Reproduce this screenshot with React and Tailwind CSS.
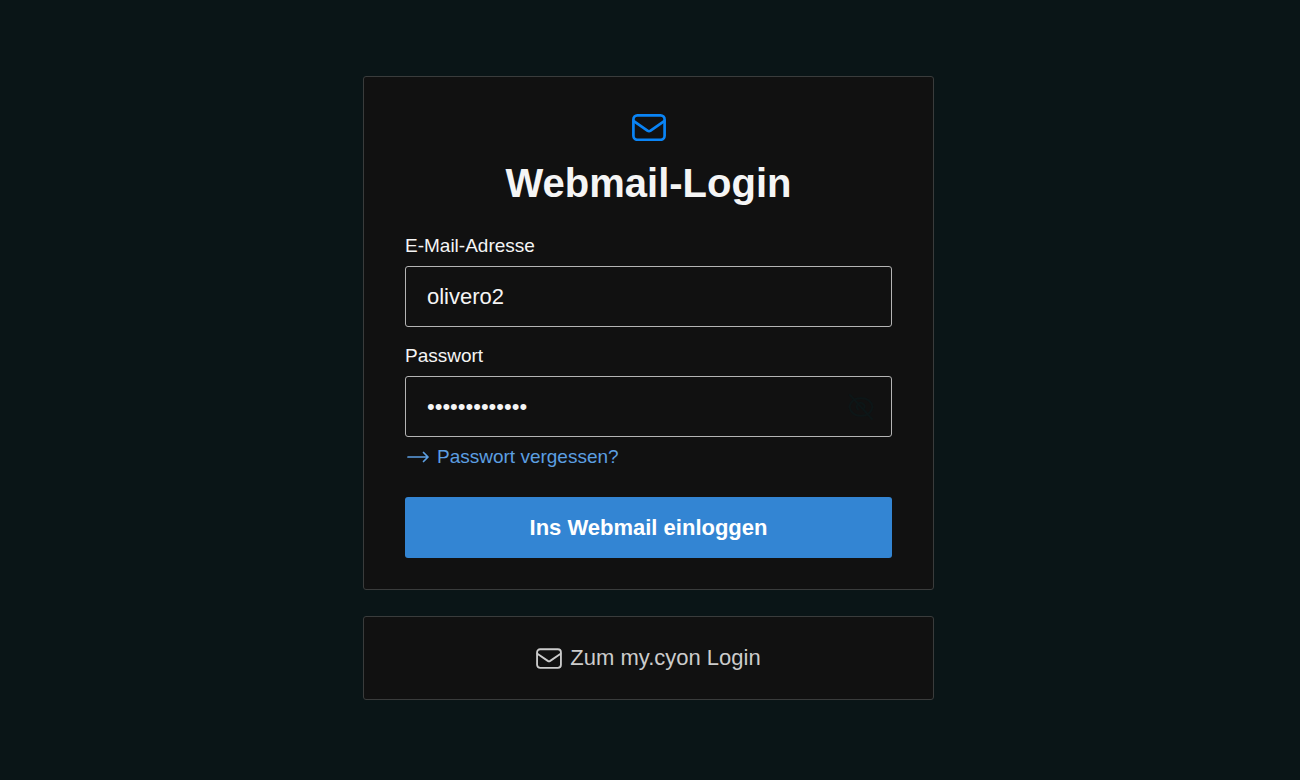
import React, { useState } from 'react';
import clsx from 'clsx';

const MailIcon = ({ className, strokeWidth }) => (
    <svg viewBox="0 0 34 27" fill="none" stroke="currentColor" strokeWidth={strokeWidth} strokeLinecap="round" strokeLinejoin="round" className={className} aria-hidden="true">
        <rect x="1.4" y="1.4" width="31.2" height="24.4" rx="4" />
        <path d="M1.8 7.2 L15.4 16.6 Q17 17.6 18.6 16.6 L32.2 7.2" />
    </svg>
);

const ArrowIcon = () => (
    <svg viewBox="0 0 24 12" fill="none" stroke="currentColor" strokeWidth="1.7" strokeLinecap="round" strokeLinejoin="round" className="h-3 w-6" aria-hidden="true">
        <path d="M1 6 H21 M16.5 1.5 L21 6 L16.5 10.5" />
    </svg>
);

const EyeOffIcon = () => (
    <svg viewBox="0 0 26 26" fill="none" stroke="currentColor" strokeWidth="2" strokeLinecap="round" className="size-[26px]" aria-hidden="true">
        <path d="M1.5 13 Q3 4.5 13 4 Q23 4.5 24.5 13 Q23 21.5 13 22 Q3 21.5 1.5 13 Z" />
        <path d="M10 15.5 A3.8 3.8 0 1 1 16 14.5" />
        <path d="M2 1 L24 25" />
    </svg>
);

const Field = ({ id, label, className, children, ...props }) => (
    <div className={className}>
        <label htmlFor={id} className="mb-2 block text-[19px] leading-6">{label}</label>
        <div className="relative">
            <input
                id={id}
                className="block h-[61px] w-full rounded-[3px] border border-[#b4b4b4] bg-transparent px-[21px] text-[22px] leading-7 text-[#f5f5f5] outline-none focus:border-[#3385d3]"
                {...props}
            />
            {children}
        </div>
    </div>
);

const App = () => {
    const [email, setEmail] = useState('olivero2');
    const [password, setPassword] = useState('webmail-login');
    const [visible, setVisible] = useState(false);

    return (
        <div className="min-h-screen bg-[#0a1517] py-[76px] pr-[19px] pl-4 font-['Liberation_Sans',Arial,sans-serif] text-[#f5f5f5]">
            <main className="mx-auto flex w-full max-w-[571px] flex-col gap-[26px]">
                <form
                    onSubmit={(e) => e.preventDefault()}
                    className="rounded-[3px] border border-[#3a3c3c] bg-[#111111] px-[41px] pt-[37px] pb-[31px]"
                >
                    <MailIcon className="mx-auto h-[27px] w-[34px] text-[#0a84f5]" strokeWidth="2.7" />
                    <h1 className="mt-[18px] text-center text-[40px] leading-[48px] font-bold">Webmail-Login</h1>

                    <Field
                        id="email"
                        label="E-Mail-Adresse"
                        className="mt-[27px]"
                        type="text"
                        value={email}
                        onChange={(e) => setEmail(e.target.value)}
                    />

                    <Field
                        id="password"
                        label="Passwort"
                        className="mt-[17px]"
                        type={visible ? 'text' : 'password'}
                        value={password}
                        onChange={(e) => setPassword(e.target.value)}
                    >
                        <button
                            type="button"
                            aria-label="Passwort anzeigen"
                            onClick={() => setVisible(!visible)}
                            className={clsx('absolute inset-y-0 right-[18px] flex items-center', visible ? 'text-[#b4b4b4]' : 'text-[#0d1617]')}
                        >
                            <EyeOffIcon />
                        </button>
                    </Field>

                    <a href="#" className="mt-2 flex w-fit items-center gap-1.5 pl-0.5 text-[19px] leading-6 text-[#5c9fe2]">
                        <ArrowIcon />
                        Passwort vergessen?
                    </a>

                    <button type="submit" className="mt-7 h-[61px] w-full rounded-[3px] bg-[#3385d3] text-[22px] leading-7 font-bold text-white">
                        Ins Webmail einloggen
                    </button>
                </form>

                <a href="#" className="flex h-[84px] items-center justify-center gap-2 rounded-[3px] border border-[#3a3c3c] bg-[#111111] text-[22px] leading-7 text-[#cccccc]">
                    <MailIcon className="h-[21px] w-[26px]" strokeWidth="2.4" />
                    Zum my.cyon Login
                </a>
            </main>
        </div>
    );
};

export default App;
